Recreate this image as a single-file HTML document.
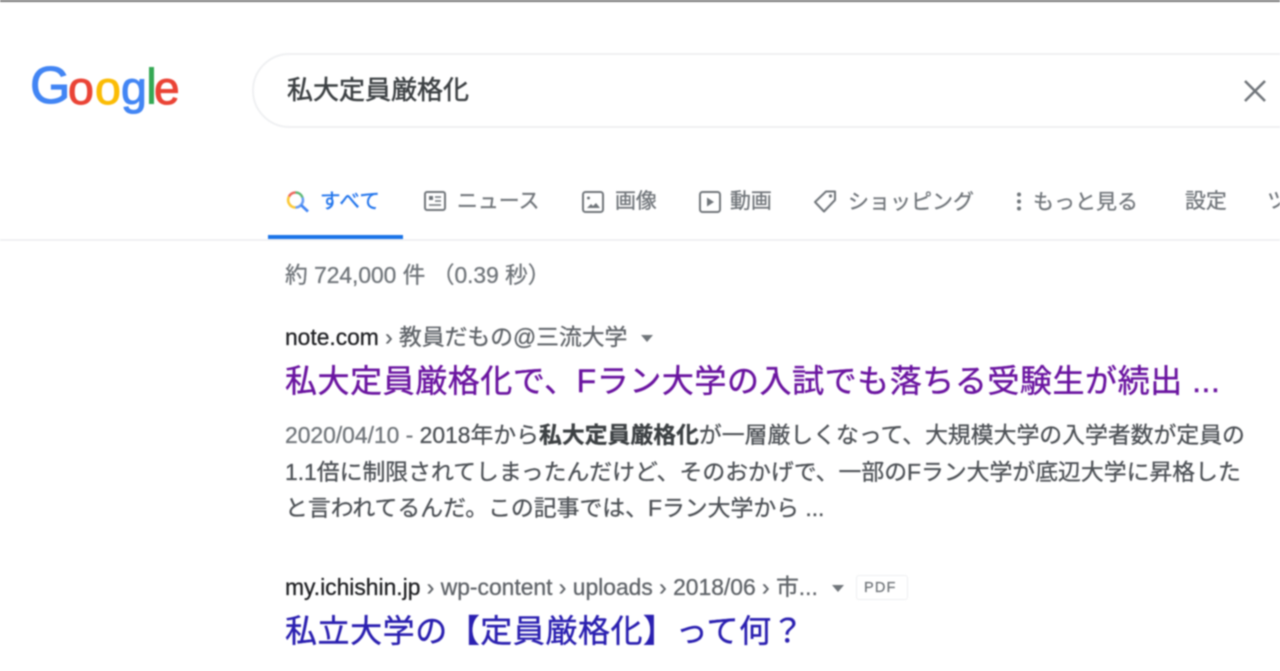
<!DOCTYPE html>
<html lang="ja"><head><meta charset="utf-8"><title>私大定員厳格化</title>
<style>
html,body{margin:0;padding:0;background:#fff;width:1280px;height:671px;overflow:hidden}
#p{position:relative;width:1280px;height:671px;overflow:hidden;filter:blur(.7px);font-family:"Liberation Sans","Noto Sans CJK JP",sans-serif}
.t{position:absolute;white-space:nowrap;line-height:1;-webkit-text-stroke:.3px currentColor}
.n{color:#70757a;font-size:20.9px;top:192px}
svg{position:absolute;overflow:visible}
.l{position:absolute;font-family:"Liberation Sans",sans-serif;line-height:1;-webkit-text-stroke:1px currentColor}
</style></head><body><div id="p">
<div style="position:absolute;left:0;top:0;width:1280px;height:1.5px;background:#777"></div>

<div class="l" style="left:30px;top:60px;font-size:52px;color:#4285f4">G</div>
<div class="l" style="left:68px;top:64.5px;font-size:46.5px;color:#ea4335">o</div>
<div class="l" style="left:95px;top:64.5px;font-size:46.5px;color:#fbbc05">o</div>
<div class="l" style="left:121px;top:64.5px;font-size:46.5px;color:#4285f4">g</div>
<div style="position:absolute;left:149px;top:67px;width:5px;height:37px;background:#34a853"></div>
<div class="l" style="left:154px;top:64.5px;font-size:46px;color:#ea4335">e</div>

<div style="position:absolute;left:252px;top:53px;width:1100px;height:71px;border:2px solid #eff0f2;border-radius:38px;box-sizing:content-box"></div>
<div class="t" style="left:287px;top:77px;font-size:26px;color:#3c4043;-webkit-text-stroke:.5px #3c4043">私大定員厳格化</div>
<svg style="left:1243px;top:79px" width="24" height="24" viewBox="0 0 24 24"><path d="M2 2L22 22M22 2L2 22" stroke="#70757a" stroke-width="2.6" fill="none"/></svg>

<svg style="left:286px;top:190px" width="24" height="24" viewBox="0 0 24 24" fill="none" stroke-width="2.6"><path d="M9.5 2.5A7.5 7.5 0 0 1 16.5 7.5" stroke="#34a853" opacity=".8"/><path d="M9.5 2.5A7.5 7.5 0 0 0 3 6.5" stroke="#ea4335" opacity=".8"/><path d="M3 6.5A7.5 7.5 0 0 0 9.5 17.5" stroke="#fbbc05" opacity=".8"/><path d="M9.5 17.5A7.5 7.5 0 0 0 16.5 7.5" stroke="#4285f4" opacity=".8"/><path d="M15 15L22 21.5" stroke="#4285f4" stroke-width="2.8"/></svg>
<div class="t" style="left:320px;top:192px;font-size:20.5px;color:#1a73e8;letter-spacing:.3px;-webkit-text-stroke:.5px #4285f4">すべて</div>
<div style="position:absolute;left:268px;top:234.5px;width:135px;height:4px;background:#1a73e8"></div>

<svg style="left:423px;top:190px" width="24" height="22" viewBox="0 0 24 22" fill="none" stroke="#70757a" stroke-width="2"><rect x="2" y="2" width="20" height="18" rx="2"/><rect x="6" y="6" width="4" height="4" fill="#70757a" stroke="none"/><path d="M12 7H18M12 11H18M6 15H18" stroke-width="1.6"/></svg>
<div class="t n" style="left:457px">ニュース</div>

<svg style="left:581px;top:190px" width="24" height="24" viewBox="0 0 24 24" fill="none" stroke="#70757a" stroke-width="2"><rect x="2" y="2" width="20" height="20" rx="2.5"/><circle cx="7.5" cy="8" r="1.5" fill="#70757a" stroke="none"/><path d="M6 18L10 14L12 16L15 13L19 18Z" fill="#70757a" stroke="none"/></svg>
<div class="t n" style="left:615px">画像</div>

<svg style="left:698px;top:190px" width="24" height="24" viewBox="0 0 24 24" fill="none" stroke="#70757a" stroke-width="2"><rect x="2" y="2" width="20" height="20" rx="2.5"/><path d="M9 7.5L16 12L9 16.5Z" fill="#70757a" stroke="none"/></svg>
<div class="t n" style="left:730px">動画</div>

<svg style="left:813px;top:189px" width="25" height="25" viewBox="0 0 25 25" fill="none" stroke="#70757a" stroke-width="2"><path d="M2 13L13 2.5H22V11L11 22.5Z" stroke-linejoin="round"/><circle cx="17.5" cy="7" r="1.6" fill="#70757a" stroke="none"/></svg>
<div class="t n" style="left:848px;font-size:21px">ショッピング</div>

<svg style="left:1015px;top:192px" width="8" height="20" viewBox="0 0 8 20" fill="#70757a"><circle cx="4" cy="2.5" r="2"/><circle cx="4" cy="9.5" r="2"/><circle cx="4" cy="16.5" r="2"/></svg>
<div class="t n" style="left:1033px;font-size:21px">もっと見る</div>
<div class="t n" style="left:1185px">設定</div>
<div class="t n" style="left:1267px">ツール</div>

<div style="position:absolute;left:0;top:239px;width:1280px;height:2px;background:#f0f1f3"></div>

<div class="t" style="left:285px;top:264px;font-size:22.75px;color:#70757a">約 724,000 件 （0.39 秒）</div>

<div class="t" style="left:285px;top:326px;font-size:22.8px;color:#202124">note.com<span style="color:#5f6368"> › 教員だもの@三流大学</span></div>
<svg style="left:641px;top:335px" width="12" height="7" viewBox="0 0 12 7"><path d="M0 0H12L6 7Z" fill="#70757a"/></svg>
<div class="t" style="left:285px;top:365px;font-size:32px;color:#6a14a0;letter-spacing:.55px;-webkit-text-stroke:.4px #6a14a0">私大定員厳格化で、Fラン大学の入試でも落ちる受験生が続出 ...</div>

<div class="t" style="left:285px;top:424px;font-size:22.85px;color:#70757a">2020/04/10 - <span style="color:#4d5156">2018年から<b style="color:#3c4043">私大定員厳格化</b>が一層厳しくなって、大規模大学の入学者数が定員の</span></div>
<div class="t" style="left:285px;top:461px;font-size:22.85px;color:#4d5156">1.1倍に制限されてしまったんだけど、そのおかげで、一部のFラン大学が底辺大学に昇格した</div>
<div class="t" style="left:285px;top:497px;font-size:22.85px;color:#4d5156">と言われてるんだ。この記事では、Fラン大学から ...</div>

<div class="t" style="left:285px;top:576px;font-size:22.85px;color:#202124">my.ichishin.jp<span style="color:#5f6368"> › wp-content › uploads › 2018/06 › 市...</span></div>
<svg style="left:832px;top:585px" width="12" height="7" viewBox="0 0 12 7"><path d="M0 0H12L6 7Z" fill="#70757a"/></svg>
<div style="position:absolute;left:856px;top:575px;width:52px;height:25px;border:1.5px solid #eeeff1;border-radius:3px;box-sizing:border-box"></div>
<div class="t" style="left:864px;top:581px;font-size:14.5px;color:#70757a;letter-spacing:1.2px">PDF</div>
<div class="t" style="left:285px;top:615px;font-size:32px;color:#2a1fb0;letter-spacing:.55px;-webkit-text-stroke:.4px #2a1fb0">私立大学の【定員厳格化】って何？</div>
</div></body></html>
